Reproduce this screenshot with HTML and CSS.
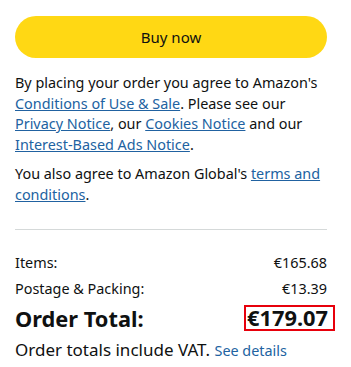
FILE: index.html
```html
<!DOCTYPE html>
<html>
<head>
<meta charset="utf-8">
<link rel="stylesheet" href="styles.css">
</head>
<body>
<div class="panel">
  <button class="buy">Buy now</button>
  <p class="legal">By placing your order you agree to Amazon's <a href="#">Conditions of Use &amp; Sale</a>. Please see our <a href="#">Privacy Notice</a>, our <a href="#">Cookies Notice</a> and our <a href="#">Interest-Based Ads Notice</a>.</p>
  <p class="legal second">You also agree to Amazon Global's <a href="#">terms and conditions</a>.</p>
  <hr class="sep">
  <div class="row"><span>Items:</span><span>€165.68</span></div>
  <div class="row"><span>Postage &amp; Packing:</span><span>€13.39</span></div>
  <div class="row total"><span>Order Total:</span><span class="price">€179.07</span></div>
  <p class="vat">Order totals include VAT. <a href="#">See details</a></p>
</div>
</body>
</html>
```
FILE: styles.css
```css
html, body { margin: 0; padding: 0; background: #fff; }
body { font-family: "Noto Sans", "Open Sans", sans-serif; color: #0f1111; }
.panel { padding: 16px 24px 0 15px; }
.buy {
  display: block; width: 312px; height: 42px; border: 0; border-radius: 21px;
  background: #ffd814; color: #0f1111; font-family: inherit; font-size: 15px;
}
.legal { margin: 15px 0 0; font-size: 14.4px; line-height: 20.5px; }
.legal a { color: #2162a1; text-decoration: underline; }
.second { margin-top: 9px; }
.sep { margin: 24px 0 0; border: 0; border-top: 1px solid #d5d9d9; height: 0; width: 312px; }
.row { display: flex; justify-content: space-between; align-items: center; width: 312px; font-size: 14.4px; line-height: 18px; }
.row:first-of-type { margin-top: 24px; }
.row + .row { margin-top: 8px; }
.total { font-size: 21.8px; font-weight: 700; line-height: 26px; margin-top: 4px; }
.price { border: 2px solid #e7000b; padding: 0 5px 0 1px; margin: -2px -8px 0 0; line-height: 22px; }
.vat { margin: 6px 0 0; font-size: 17px; line-height: 24px; }
.vat a { color: #2162a1; text-decoration: none; font-size: 14.4px; }
```
